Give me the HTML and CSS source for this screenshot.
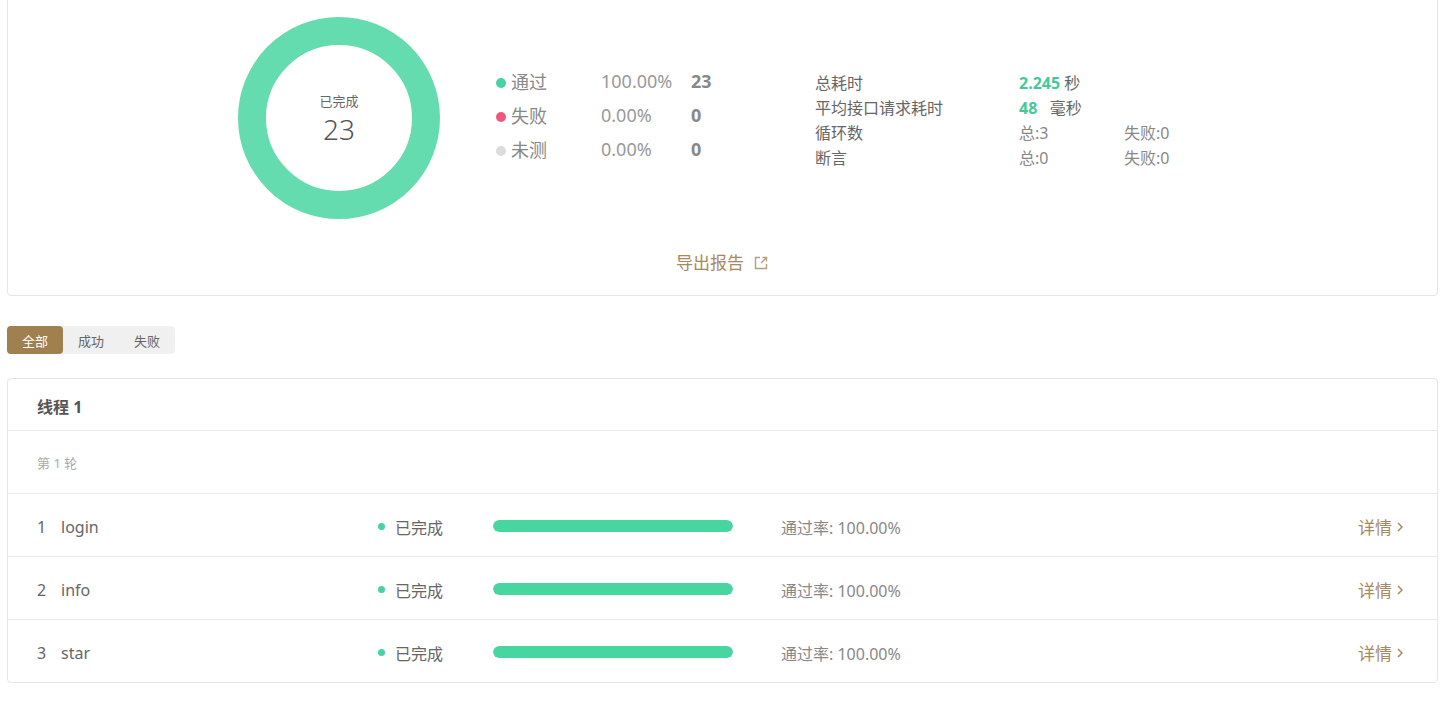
FILE: index.html
```html
<!DOCTYPE html>
<html lang="zh-CN">
<head>
<meta charset="utf-8">
<title>测试报告</title>
<link rel="stylesheet" href="styles.css">
</head>
<body>
<div class="page">
  <section class="card summary-card">
    <div class="summary">
      <div class="donut">
        <span class="donut-label">已完成</span>
        <span class="donut-value">23</span>
      </div>
      <div class="legend">
        <div class="legend-row">
          <span class="legend-name"><i class="dot dot-pass"></i>通过</span>
          <span class="legend-pct">100.00%</span>
          <span class="legend-count">23</span>
        </div>
        <div class="legend-row">
          <span class="legend-name"><i class="dot dot-fail"></i>失败</span>
          <span class="legend-pct">0.00%</span>
          <span class="legend-count">0</span>
        </div>
        <div class="legend-row">
          <span class="legend-name"><i class="dot dot-none"></i>未测</span>
          <span class="legend-pct">0.00%</span>
          <span class="legend-count">0</span>
        </div>
      </div>
      <div class="stats">
        <div class="stat-row">
          <span class="stat-label">总耗时</span>
          <span class="stat-val"><b class="num">2.245</b> 秒</span>
        </div>
        <div class="stat-row">
          <span class="stat-label">平均接口请求耗时</span>
          <span class="stat-val"><b class="num">48</b>&nbsp;&nbsp;&nbsp;毫秒</span>
        </div>
        <div class="stat-row">
          <span class="stat-label">循环数</span>
          <span class="stat-val light">总:3</span>
          <span class="stat-extra">失败:0</span>
        </div>
        <div class="stat-row">
          <span class="stat-label">断言</span>
          <span class="stat-val light">总:0</span>
          <span class="stat-extra">失败:0</span>
        </div>
      </div>
    </div>
    <div class="export-wrap">
      <a class="export" href="#">导出报告
        <svg class="export-icon" viewBox="0 0 16 16" width="16" height="16" aria-hidden="true">
          <path d="M7 2.5H2.5v11h11V9" fill="none" stroke="currentColor" stroke-width="1.4"/>
          <path d="M9.5 2.5h4v4M13.5 2.5L8 8" fill="none" stroke="currentColor" stroke-width="1.4"/>
        </svg>
      </a>
    </div>
  </section>

  <div class="tabs">
    <span class="tab active">全部</span>
    <span class="tab">成功</span>
    <span class="tab">失败</span>
  </div>

  <section class="card thread-card">
    <div class="thread-head">线程 1</div>
    <div class="round">第 1 轮</div>
    <div class="row">
      <span class="idx">1</span><span class="name">login</span>
      <span class="status"><i class="sdot"></i>已完成</span>
      <span class="bar"><span class="bar-fill" style="width:100%"></span></span>
      <span class="rate">通过率: 100.00%</span>
      <a class="detail" href="#">详情<svg class="chev" viewBox="0 0 6 10" width="6" height="10" aria-hidden="true"><path d="M1 1l4 4-4 4" fill="none" stroke="currentColor" stroke-width="1.5"/></svg></a>
    </div>
    <div class="row">
      <span class="idx">2</span><span class="name">info</span>
      <span class="status"><i class="sdot"></i>已完成</span>
      <span class="bar"><span class="bar-fill" style="width:100%"></span></span>
      <span class="rate">通过率: 100.00%</span>
      <a class="detail" href="#">详情<svg class="chev" viewBox="0 0 6 10" width="6" height="10" aria-hidden="true"><path d="M1 1l4 4-4 4" fill="none" stroke="currentColor" stroke-width="1.5"/></svg></a>
    </div>
    <div class="row">
      <span class="idx">3</span><span class="name">star</span>
      <span class="status"><i class="sdot"></i>已完成</span>
      <span class="bar"><span class="bar-fill" style="width:100%"></span></span>
      <span class="rate">通过率: 100.00%</span>
      <a class="detail" href="#">详情<svg class="chev" viewBox="0 0 6 10" width="6" height="10" aria-hidden="true"><path d="M1 1l4 4-4 4" fill="none" stroke="currentColor" stroke-width="1.5"/></svg></a>
    </div>
  </section>
</div>
</body>
</html>
```
FILE: styles.css
```css
* { box-sizing: border-box; }
html, body { margin: 0; padding: 0; background: #fff; overflow: hidden; }
body {
  font-family: "Noto Sans", "Noto Sans CJK SC", sans-serif;
  color: #666;
}
.page {
  padding: 0 18px 0 7px;
}
.card {
  border: 1px solid #e6e6e6;
  border-radius: 4px;
  background: #fff;
}
.summary-card {
  margin-top: -20px;
  padding: 36px 0 20px;
}
.summary {
  display: flex;
  align-items: flex-start;
  padding-left: 230px;
}
.donut {
  width: 202px;
  height: 202px;
  border-radius: 50%;
  border: 28px solid #64dcb0;
  display: flex;
  flex-direction: column;
  align-items: center;
  justify-content: center;
  flex: none;
}
.donut-label {
  font-size: 13px;
  line-height: 14px;
  color: #666;
  margin-top: 4px;
}
.donut-value {
  font-size: 28px;
  line-height: 34px;
  margin-top: 4px;
  color: #555;
  font-weight: 300;
}
.legend {
  margin-left: 56px;
  margin-top: 47px;
  width: 319px;
  flex: none;
}
.legend-row {
  display: flex;
  align-items: center;
  height: 34px;
  font-size: 18px;
}
.legend-name {
  width: 105px;
  display: flex;
  align-items: center;
  color: #888;
}
.dot {
  width: 10px;
  height: 10px;
  border-radius: 50%;
  margin-right: 5px;
  margin-top: 3px;
  display: inline-block;
}
.dot-pass { background: #46d39f; }
.dot-fail { background: #f4567b; }
.dot-none { background: #dcdcdc; }
.legend-pct {
  width: 90px;
  color: #999;
  font-weight: 400;
}
.legend-count {
  font-weight: 700;
  color: #888;
}
.stats {
  margin-top: 52px;
  flex: none;
}
.stat-row {
  display: flex;
  align-items: center;
  height: 25px;
  font-size: 16px;
}
.stat-label {
  width: 204px;
  color: #666;
}
.stat-val {
  width: 105px;
  color: #666;
}
.stat-val.light, .stat-extra { color: #888; }
.num {
  color: #46c99a;
  font-weight: 700;
}
.export-wrap {
  margin-top: 32px;
  display: flex;
  justify-content: center;
}
.export {
  display: flex;
  align-items: center;
  gap: 9px;
  font-size: 17px;
  line-height: 24px;
  color: #a8895f;
  text-decoration: none;
}
.export-icon { color: #b89e7c; }
.tabs {
  display: inline-flex;
  margin-top: 30px;
  background: #f0f0f0;
  border-radius: 4px;
}
.tab {
  width: 56px;
  height: 28px;
  display: flex;
  align-items: center;
  justify-content: center;
  font-size: 13px;
  color: #666;
  border-radius: 4px;
}
.tab.active {
  background: #a0804f;
  color: #fff;
}
.thread-card {
  margin-top: 24px;
}
.thread-head {
  height: 52px;
  padding: 3px 29px 0;
  display: flex;
  align-items: center;
  font-size: 16px;
  font-weight: 700;
  color: #555;
  border-bottom: 1px solid #e8e8e8;
}
.round {
  height: 62px;
  padding: 1px 29px 0;
  display: flex;
  align-items: center;
  font-size: 13px;
  color: #aaa;
}
.row {
  height: 63px;
  border-top: 1px solid #ebebeb;
  padding: 3px 34px 0 29px;
  display: flex;
  align-items: center;
  font-size: 16px;
  color: #666;
}
.idx { width: 24px; }
.name { width: 317px; }
.status {
  width: 115px;
  display: flex;
  align-items: center;
}
.sdot {
  width: 7px;
  height: 7px;
  border-radius: 50%;
  background: #46d39f;
  margin-right: 10px;
  display: inline-block;
}
.bar {
  width: 240px;
  height: 12px;
  border-radius: 6px;
  background: #eee;
  overflow: hidden;
  margin-right: 48px;
  margin-top: -2px;
  display: block;
}
.bar-fill {
  display: block;
  height: 100%;
  background: #48d6a0;
  border-radius: 6px;
}
.rate { color: #888; flex: 1; }
.detail {
  color: #a8895f;
  text-decoration: none;
  display: flex;
  align-items: center;
  font-size: 17px;
}
.chev {
  margin-left: 5px;
  margin-top: 1px;
  color: #a8895f;
}
```
